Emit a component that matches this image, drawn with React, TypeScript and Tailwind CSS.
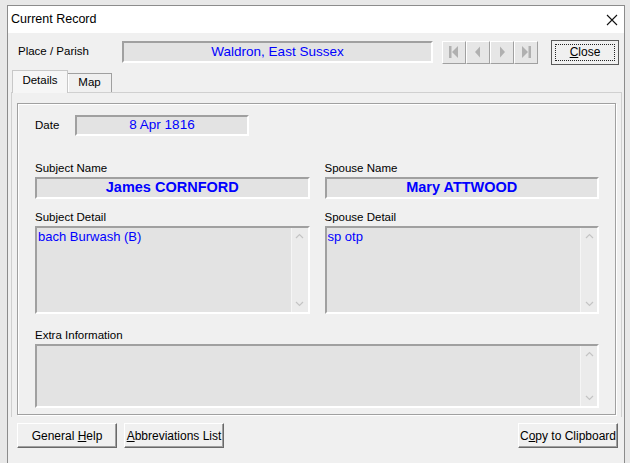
import React from 'react'

const ui = { fontFamily: '"Liberation Sans", Arial, sans-serif' }

function Sunken({ className = '', children }: { className?: string; children?: React.ReactNode }) {
  return (
    <div
      className={`border-2 border-t-[#a0a0a0] border-l-[#a0a0a0] border-b-white border-r-white bg-[#e3e3e3] text-[#0000ff] ${className}`}
    >
      {children}
    </div>
  )
}

function ScrollArea({ className = '', text }: { className?: string; text?: string }) {
  return (
    <Sunken className={`flex ${className}`}>
      <div className="flex-1 px-[1px] pt-[1px] text-[13px] leading-[16px]">{text}</div>
      <div className="w-[17px] bg-[#ebebeb] border-l border-[#f5f5f5] flex flex-col items-center justify-between py-[5px]">
        <svg width="9" height="6" viewBox="0 0 9 6">
          <path d="M1 5 L4.5 1.5 L8 5" fill="none" stroke="#c4c4c4" strokeWidth="1.2" />
        </svg>
        <svg width="9" height="6" viewBox="0 0 9 6">
          <path d="M1 1 L4.5 4.5 L8 1" fill="none" stroke="#c4c4c4" strokeWidth="1.2" />
        </svg>
      </div>
    </Sunken>
  )
}

function Label({ children }: { children: React.ReactNode }) {
  return <div className="text-[11.5px] leading-[14px] text-black mb-[2px]">{children}</div>
}

function Btn({ children, className = '' }: { children: React.ReactNode; className?: string }) {
  return (
    <div
      className={`h-[25px] flex items-center justify-center bg-[#f0f0f0] border border-t-white border-l-white border-b-[#696969] border-r-[#696969] shadow-[inset_-1px_-1px_0_#a0a0a0] text-[12px] text-black ${className}`}
    >
      {children}
    </div>
  )
}

function NavBtn({ kind }: { kind: 'first' | 'prev' | 'next' | 'last' }) {
  return (
    <div className="w-[24px] h-[23px] flex items-center justify-center bg-[#e6e6e6] border border-t-white border-l-white border-b-[#a0a0a0] border-r-[#a0a0a0]">
      <svg width="12" height="14" viewBox="0 0 12 14">
        {kind === 'first' && (
          <>
            <rect x="1" y="1" width="2.5" height="12" fill="#b0b0b0" />
            <polygon points="10,1 4,7 10,13" fill="#b0b0b0" />
          </>
        )}
        {kind === 'prev' && <polygon points="8,1.5 3,7 8,12.5" fill="#b0b0b0" />}
        {kind === 'next' && <polygon points="4,1.5 9,7 4,12.5" fill="#b0b0b0" />}
        {kind === 'last' && (
          <>
            <polygon points="2,1 8,7 2,13" fill="#b0b0b0" />
            <rect x="8.5" y="1" width="2.5" height="12" fill="#b0b0b0" />
          </>
        )}
      </svg>
    </div>
  )
}

export default function App() {
  return (
    <div className="w-[630px] h-[463px] bg-[#e8e8e8] pt-[5px] pl-[7px] pr-[5px] overflow-hidden" style={ui}>
      <div className="h-full flex flex-col bg-[#f0f0f0] border-l border-r border-t border-[#8c8c8c]">
        {/* Title bar */}
        <div className="h-[27px] bg-white flex items-center justify-between pl-[3px] pr-[6px]">
          <span className="text-[12.5px] text-black">Current Record</span>
          <svg width="12" height="12" viewBox="0 0 12 12">
            <path d="M1 1 L11 11 M11 1 L1 11" stroke="#111" strokeWidth="1.1" />
          </svg>
        </div>

        {/* Place row */}
        <div className="flex items-center pl-[10px] pt-[7px] h-[31px]">
          <span className="w-[104px] text-[11.5px] text-black">Place / Parish</span>
          <Sunken className="w-[311px] h-[22px] flex items-center justify-center text-[13.5px]">
            Waldron, East Sussex
          </Sunken>
          <div className="ml-[9px] flex">
            <NavBtn kind="first" />
            <NavBtn kind="prev" />
            <NavBtn kind="next" />
            <NavBtn kind="last" />
          </div>
          <div className="ml-[13px] w-[68px] h-[25px] border border-[#5a5a5a] bg-[#f0f0f0] p-[3px] flex">
            <div className="flex-1 border border-dotted border-[#222] flex items-center justify-center text-[12px] text-black">
              <span>
                <span className="underline">C</span>lose
              </span>
            </div>
          </div>
        </div>

        {/* Tabs */}
        <div className="flex items-end pl-[4px] mt-[5px] h-[23px]">
          <div className="h-[23px] w-[56px] bg-[#f6f6f6] border border-b-0 border-[#c8c8c8] flex items-center justify-center text-[11.5px] text-black -mb-px relative z-10 pb-[2px]">
            Details
          </div>
          <div className="h-[19px] w-[44px] bg-[#f0f0f0] border border-b-0 border-l-0 border-[#a0a0a0] shadow-[inset_1px_0_0_#fff] flex items-center justify-center text-[11.5px] text-black">
            Map
          </div>
        </div>

        {/* Tab panel */}
        <div className="ml-[3px] mr-[2px] h-[325px] border border-[#d0d0d0] border-b-0 pt-[10px] px-[5px]">
          <div className="h-[312px] border border-[#a0a0a0] shadow-[inset_1px_1px_0_#fff,1px_1px_0_#fff] pl-[17px] pr-[16px] pt-[11px]">
            <div className="flex items-center">
              <span className="w-[40px] text-[11.5px] text-black">Date</span>
              <Sunken className="w-[174px] h-[21px] flex items-center justify-center text-[13.5px]">8 Apr 1816</Sunken>
            </div>

            <div className="flex gap-[15px] mt-[25px]">
              <div className="flex-1">
                <Label>Subject Name</Label>
                <Sunken className="h-[22px] flex items-center justify-center text-[14.5px] font-bold">James CORNFORD</Sunken>
              </div>
              <div className="flex-1">
                <Label>Spouse Name</Label>
                <Sunken className="h-[22px] flex items-center justify-center text-[14.5px] font-bold">Mary ATTWOOD</Sunken>
              </div>
            </div>

            <div className="flex gap-[15px] mt-[11px]">
              <div className="flex-1">
                <Label>Subject Detail</Label>
                <ScrollArea className="h-[88px]" text="bach Burwash (B)" />
              </div>
              <div className="flex-1">
                <Label>Spouse Detail</Label>
                <ScrollArea className="h-[88px]" text="sp otp" />
              </div>
            </div>

            <div className="mt-[14px]">
              <Label>Extra Information</Label>
              <ScrollArea className="h-[64px]" />
            </div>
          </div>
        </div>

        {/* Bottom buttons */}
        <div className="flex items-center pl-[9px] pr-[6px] mt-[6px]">
          <Btn className="w-[100px]">
            <span>
              General <span className="underline">H</span>elp
            </span>
          </Btn>
          <Btn className="w-[100px] ml-[7px]">
            <span>
              <span className="underline">A</span>bbreviations List
            </span>
          </Btn>
          <div className="flex-1" />
          <Btn className="w-[100px]">
            <span>
              C<span className="underline">o</span>py to Clipboard
            </span>
          </Btn>
        </div>
      </div>
    </div>
  )
}
